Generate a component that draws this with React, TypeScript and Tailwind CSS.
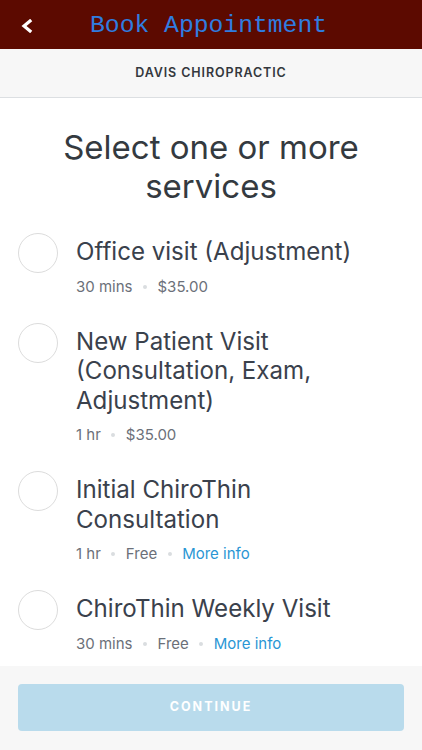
import React from "react";

type Service = { title: string; duration: string; price: string; more?: boolean };

const services: Service[] = [
  { title: "Office visit (Adjustment)", duration: "30 mins", price: "$35.00" },
  { title: "New Patient Visit (Consultation, Exam, Adjustment)", duration: "1 hr", price: "$35.00" },
  { title: "Initial ChiroThin Consultation", duration: "1 hr", price: "Free", more: true },
  { title: "ChiroThin Weekly Visit", duration: "30 mins", price: "Free", more: true },
];

function Dot() {
  return <span className="mx-[10.5px] inline-block h-[4px] w-[4px] rounded-full bg-[#dadde0] align-middle" />;
}

export default function App() {
  return (
    <div className="flex h-[750px] w-[422px] flex-col overflow-hidden bg-white" style={{ fontFamily: 'Inter, sans-serif' }}>
      <header className="flex h-[49px] shrink-0 items-center bg-[#5c0a00]">
        <div className="flex w-[90px] items-center pl-[20px] pt-[2px]">
          <svg width="14" height="14" viewBox="0 0 14 14">
            <polyline points="10,2 4,7 10,12" fill="none" stroke="white" strokeWidth="3.2" strokeLinecap="square" strokeLinejoin="miter" />
          </svg>
        </div>
        <h1 className="pt-[2px] text-[24.7px] leading-none text-[#2f7de0]" style={{ fontFamily: '"Liberation Mono", monospace' }}>
          Book Appointment
        </h1>
      </header>
      <div className="flex h-[49px] shrink-0 items-center justify-center border-b border-[#dcdfe2] bg-[#f7f7f7]">
        <span className="text-[12.5px] font-semibold tracking-[0.9px] text-[#34383d]">DAVIS CHIROPRACTIC</span>
      </div>
      <main className="flex-1 overflow-hidden">
        <h2 className="px-[30px] pt-[30px] text-center text-[33px] leading-[39px] text-[#343a40]">
          Select one or more services
        </h2>
        <ul className="mt-[31px] flex flex-col gap-[30px] pl-[18px] pr-[30px]">
          {services.map((s) => (
            <li key={s.title} className="flex items-start">
              <span className="mt-[-4px] h-[40px] w-[40px] shrink-0 rounded-full border border-[#dcdcdc]" />
              <div className="ml-[18px] flex flex-col">
                <span className="text-[24.1px] leading-[29.5px] text-[#3a414c]">{s.title}</span>
                <span className="mt-[10px] flex items-center text-[15px] leading-[20px] text-[#6b7079]">
                  {s.duration}
                  <Dot />
                  {s.price}
                  {s.more && (
                    <>
                      <Dot />
                      <span className="text-[#2a96d4]">More info</span>
                    </>
                  )}
                </span>
              </div>
            </li>
          ))}
        </ul>
      </main>
      <footer className="flex h-[84px] shrink-0 items-start bg-[#f7f7f7] px-[18px] pt-[18px]">
        <button className="flex h-[47px] w-full items-center justify-center rounded-[4px] bg-[#b9dbec] text-[12.5px] font-bold tracking-[2px] text-white">
          CONTINUE
        </button>
      </footer>
    </div>
  );
}
